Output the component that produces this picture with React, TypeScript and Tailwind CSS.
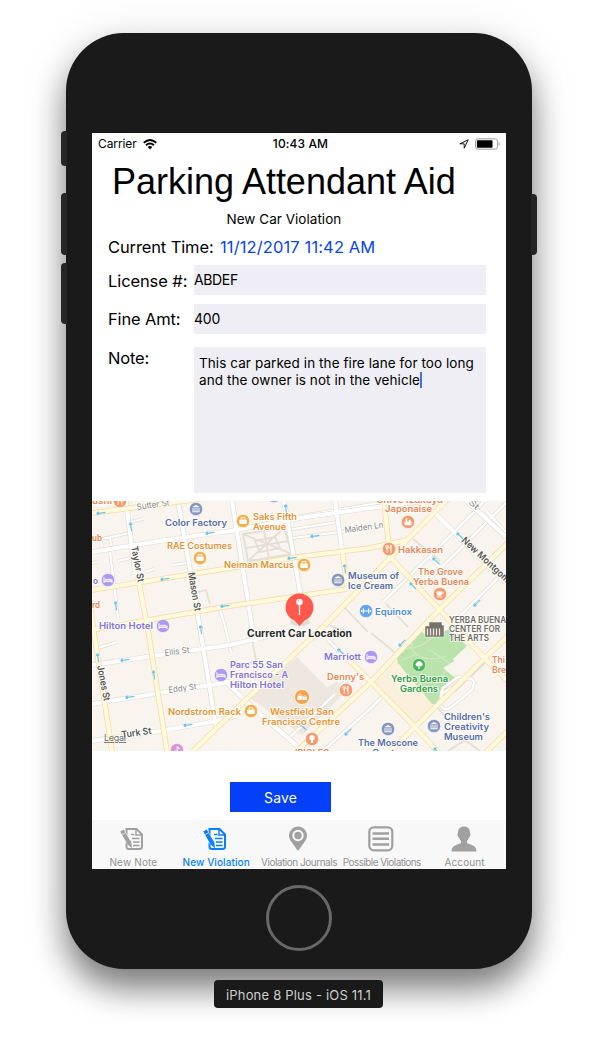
import React from "react";

const WHITE_ROADS: string[] = [
  "M92 552L160 541L230 531L300 518L370 508L440 499",
  "M126 501L135 573",
  "M178 501L190 570L200 628L216 727",
  "M232 501L252 626L256 642",
  "M284 501L301 597",
  "M335 501L342 550",
  "M92 665L160 655L230 645L290 631",
  "M92 704L160 693L230 682",
  "M92 741L160 731L216 721L236 716",
  "M222 678L252 707L297 746",
  "M435 513L470 548L506 583",
  "M467 501L506 537",
];

const THIN_ROADS: string[] = [
  "M293 538L340 532L385 526",
  "M97 540L130 533",
  "M100 540L103 550M110 538L112 549",
  "M110 552L118 618",
  "M130 522L143 519M118 561L135 557M145 572L154 569M173 565L188 563M98 648L117 642",
  "M92 563L97 562",
  "M290 518L384 502M287 530L338 522",
  "M220 610L225 626L231 652",
  "M330 572L332 580",
];

const DIAGONAL_ROADS: string[] = [
  "M383 602L431 555L478 508L484 501",
  "M418 590L452 557L506 503",
  "M450 626L506 570",
  "M323 751L370 709L382 697",
  "M328 640L350 662M340 687L352 675",
  "M290 737L335 694",
  "M450 527L470 549M487 512L506 532",
  "M430 557L446 574",
];

const YELLOW_ROADS: string[] = [
  "M92 513L200 499",
  "M92 590L230 568L297 557L370 548L407 540",
  "M92 630L160 618L230 606L347 589",
  "M138 578L148 630L167 751",
  "M90 601L93 626L112 751",
  "M342 550L348 590",
  "M193 751L250 696L323 627L388 560L407 540L448 499",
  "M384 501L389 548L390 557L438 608L485 659L508 681",
  "M297 751L370 683L438 611L508 543",
  "M385 757L415 727L485 658L508 636",
  "M350 661L371 682L415 727L439 753",
  "M485 753L508 731",
];

const ARROWS: [number, number, number][] = [
  [101, 513, -8], [131, 527, 82], [210, 533, -8], [165, 579, -8], [116, 606, 82],
  [225, 606, -8], [286, 509, 82], [315, 536, -8], [292, 558, -8], [345, 569, 82],
  [436, 561, 42], [413, 586, 45], [477, 603, -45], [201, 630, 82], [98, 658, 82],
  [125, 660, -8], [154, 675, 82], [130, 697, -8], [188, 725, -8], [341, 652, 42],
  [303, 727, 42], [348, 732, -45], [402, 643, -45], [460, 536, 42], [437, 751, 45],
];

type Kind = "bag" | "museum" | "food" | "bed" | "cup" | "gym" | "tree" | "bulb" | "music" | "shop";
const POIS: [number, number, string, Kind][] = [
  [120, 501, "#f49a6c", "food"], [196, 509, "#8495bd", "museum"], [243, 521, "#f2ae4c", "bag"],
  [200, 558, "#f2ae4c", "bag"], [108, 580, "#ad99ee", "bed"], [304, 565, "#f2ae4c", "bag"],
  [338, 580, "#8495bd", "museum"], [389, 549, "#f49a6c", "food"], [408, 522, "#f49a6c", "shop"],
  [440, 594, "#f49a6c", "cup"], [366, 611, "#66a5ea", "gym"], [163, 626, "#ad99ee", "bed"],
  [221, 675, "#ad99ee", "bed"], [371, 657, "#ad99ee", "bed"], [346, 690, "#f49a6c", "food"],
  [251, 711, "#f2ae4c", "bag"], [419, 665, "#4eb65a", "tree"], [388, 729, "#8495bd", "museum"],
  [434, 726, "#8495bd", "museum"], [312, 739, "#f49a6c", "bulb"], [177, 750, "#d59ad4", "music"],
  [274, 496, "#ad99ee", "bed"],
];

const GLYPHS: Record<Kind, React.ReactNode> = {
  bag: <g><rect x="-3.7" y="-1.5" width="7.4" height="4.5" rx=".7" fill="#fff" /><path d="M-1.8-1.7v-1.7h3.6v1.7" fill="none" stroke="#fff" strokeWidth=".9" /></g>,
  museum: <g fill="#fff"><path d="M-4-1.8L0-4l4 2.2zM-3.7 2.3h7.4v1h-7.4z" /><path d="M-3-1v3M-1-1v3M1-1v3M3-1v3" stroke="#fff" strokeWidth=".9" /></g>,
  food: <g fill="none" stroke="#fff" strokeWidth=".9"><path d="M-3-3.8v2.3q0 1 1.2 1T-.6-1.5v-2.3M-1.8-3.8V4M2 4v-8q-1.2 1.8-.9 4.5H2" /></g>,
  bed: <g stroke="#fff" fill="#fff"><path d="M-4-2.8V3M4-.2V3M-4 1.4h8" strokeWidth="1" fill="none" /><path d="M-2.8-.8h5.4q1 0 1 1.1h-6.4z" strokeWidth=".4" /></g>,
  cup: <g fill="none" stroke="#fff"><path d="M-3.2-2.6h5v2.3q0 2-2.5 2t-2.5-2z" fill="#fff" strokeWidth=".4" /><path d="M2-1.8h1.3q.8 1.6-1.3 1.6M-3.5 3h6" strokeWidth=".8" /></g>,
  gym: <path d="M-4.3-1v2M-2.6-2.5v5M2.6-2.5v5M4.3-1v2M-2.6 0h5.2" fill="none" stroke="#fff" strokeWidth="1.2" />,
  tree: <g fill="#fff"><circle cx="-1.3" cy="-.7" r="2.1" /><circle cx="1.5" cy="-.7" r="2.1" /><circle cx="0" cy="-2" r="2" /><path d="M-.6 0h1.2v4H-.6z" /></g>,
  bulb: <g fill="#fff"><circle cy="-1.3" r="2.6" /><path d="M-1 1h2v3h-2z" /></g>,
  music: <g fill="#fff"><circle cx="-1.2" cy="2" r="1.6" /><path d="M-.3 2v-5.8l2.8 1.6v1.4L.5-1.8V2z" /></g>,
  shop: <g fill="#fff"><path d="M-3.5 0h7v3.2h-7zM-2.5-3.8h1.8V0h-1.8z" /><circle cx="1.8" cy="-1" r="1.2" /></g>,
};

// x, baseline, width, colour, text, font size, rotation, weight
type Label = [number, number, number, string, string, number?, number?, number?];
const ORANGE = "#e68654";
const GOLD = "#df9433";
const VIOLET = "#8472d8";
const NAVY = "#566da5";
const LABELS: Label[] = [
  [92, 504, 20, ORANGE, "ushi"],
  [165, 526, 62, NAVY, "Color Factory"],
  [253, 520, 44, GOLD, "Saks Fifth"], [253, 530, 33, GOLD, "Avenue"],
  [167, 549, 65, GOLD, "RAE Costumes"],
  [224, 568, 70, GOLD, "Neiman Marcus"],
  [92, 541, 10, ORANGE, "ub"], [93, 584, 5, VIOLET, "o"], [92, 608, 8, ORANGE, "rd"],
  [99, 629, 54, VIOLET, "Hilton Hotel"],
  [376, 503, 67, ORANGE, "Chive Izakaya"], [385, 512, 47, ORANGE, "Japonaise"],
  [398, 553, 45, ORANGE, "Hakkasan"],
  [418, 575, 45, ORANGE, "The Grove"], [413, 585, 56, ORANGE, "Yerba Buena"],
  [348, 579, 51, NAVY, "Museum of"], [348, 589, 45, NAVY, "Ice Cream"],
  [375, 615, 37, "#4e8dd2", "Equinox"],
  [449, 623, 57, "#706c62", "YERBA BUENA"], [449, 632, 51, "#706c62", "CENTER FOR"], [449, 641, 40, "#706c62", "THE ARTS"],
  [324, 660, 37, VIOLET, "Marriott"], [327, 680, 37, ORANGE, "Denny's"],
  [230, 668, 53, VIOLET, "Parc 55 San"], [230, 678, 58, VIOLET, "Francisco - A"], [230, 688, 54, VIOLET, "Hilton Hotel"],
  [168, 715, 73, GOLD, "Nordstrom Rack"],
  [270, 715, 64, "#ef922f", "Westfield San"], [262, 725, 78, "#ef922f", "Francisco Centre"],
  [391, 682, 57, "#2c9b42", "Yerba Buena"], [400, 692, 38, "#2c9b42", "Gardens"],
  [492, 663, 13, ORANGE, "Thi"], [492, 673, 14, ORANGE, "Bre"],
  [444, 720, 46, NAVY, "Children's"], [444, 730, 45, NAVY, "Creativity"], [444, 740, 39, NAVY, "Museum"],
  [358, 746, 60, NAVY, "The Moscone"], [372, 756, 32, NAVY, "Center"],
  [295, 756, 34, ORANGE, "IPIGLES"],
];
const STREETS: Label[] = [
  [137, 510, 33, "#8a8a88", "Sutter St", 8.5, -8, 400],
  [345, 533, 39, "#8a8a88", "Maiden Ln", 8.5, -8, 400],
  [165, 656, 25, "#8a8a88", "Ellis St", 8.5, -8, 400],
  [169, 693, 28, "#8a8a88", "Eddy St", 8.5, -8, 400],
  [122, 738, 30, "#55554f", "Turk St", 9.5, -8, 600],
  [131, 547, 36, "#55554f", "Taylor St", 9.5, 79, 600],
  [188, 573, 39, "#55554f", "Mason St", 9.5, 80, 600],
  [97, 666, 36, "#55554f", "Jones St", 9.5, 79, 600],
  [461, 541, 76, "#55554f", "New Montgomery", 9.5, 43, 600],
  [468, 503, 11, "#8a8a88", "St", 8.5, 42, 400],
];

function MapText({ item }: { item: Label }) {
  const [x, y, w, fill, text, size = 9, angle = 0, weight = 600] = item;
  return (
    <text
      x={x} y={y} fill={fill} fontSize={size} fontWeight={weight} textLength={w}
      lengthAdjust="spacingAndGlyphs" transform={angle ? `rotate(${angle} ${x} ${y})` : undefined}
      stroke="#fff" strokeOpacity=".85" strokeWidth="1.8" strokeLinejoin="round" paintOrder="stroke"
    >
      {text}
    </text>
  );
}

function Roads({ list, casing, fill, width }: { list: string[]; casing: string; fill: string; width: number }) {
  return (
    <g fill="none" strokeLinejoin="round">
      {list.map((d, i) => <path key={"c" + i} d={d} stroke={casing} strokeWidth={width + 1.3} />)}
      {list.map((d, i) => <path key={"f" + i} d={d} stroke={fill} strokeWidth={width} />)}
    </g>
  );
}

function CityMap() {
  return (
    <svg viewBox="92 501 414 250" className="block h-[250px] w-[414px] shrink-0 overflow-hidden font-['Inter',sans-serif]">
      <rect x="92" y="501" width="414" height="250" fill="#f9f4ee" />
      <path d="M297 657L327 688L337 681L346 692L302 735L250 698Z" fill="#ede7e0" />
      <path d="M373 682L398 655L438 707L416 725Z" fill="#fbf0dc" />
      <path d="M396 651L418 630L433 638L449 629L467 646L453 659L460 670L435 704L432 704L398 663Z" fill="#b9e3ab" />
      <path d="M402 648Q420 650 431 638M411 640L412 650Q422 664 447 656M400 661L419 653M453 663L430 690M430 650L460 670" fill="none" stroke="#cfe9c2" strokeWidth="1.3" />
      <path d="M459 658L467 665L454 677L443 668Z" fill="#f9f4ee" />
      <g fill="none" stroke="#e3dfd4" strokeWidth="1.8">
        <path d="M243 534L284 528L292 554L248 561ZM243 534L292 554M284 528L248 561M264 531L269 558M246 548L289 541M255 541L275 537L280 548L260 552Z" />
        <path d="M198 592L206 590L210 604M344 607L368 632M386 604L408 627M413 539L440 561M252 640L256 660L240 668M486 662L454 692M436 706L450 722M448 751L465 740L480 751M371 633L398 655M330 626L350 632" />
      </g>
      <Roads list={THIN_ROADS} casing="#e2ddd5" fill="#ffffff" width={2.2} />
      <Roads list={DIAGONAL_ROADS} casing="#e0dbd4" fill="#ffffff" width={2.6} />
      <Roads list={WHITE_ROADS} casing="#e0dcd4" fill="#ffffff" width={4} />
      <path d="M441 700L441 694L467 679Q473 677 474 683L472 690L450 708Q444 711 441 706M441 694L443 688L458 677L465 678" fill="none" stroke="#dedbd3" strokeWidth="3.5" />
      <path d="M441 700L441 694L467 679Q473 677 474 683L472 690L450 708Q444 711 441 706M441 694L443 688L458 677L465 678" fill="none" stroke="#fff" strokeWidth="2.3" />
      <Roads list={YELLOW_ROADS} casing="#f8d5a8" fill="#fffadb" width={4.2} />
      <g fill="none" stroke="#6bc5ea" strokeWidth="1.2">
        {ARROWS.map(([x, y, a], i) => (
          <path key={i} transform={`translate(${x} ${y}) rotate(${a})`} d="M-4.500 0H4.500M-4.500 0l2.300-1.500M-4.500 0l2.300 1.500" />
        ))}
      </g>
      {STREETS.map((s) => <MapText key={s[4]} item={s} />)}
      <g transform="translate(425 622)" fill="#77736b" stroke="#fff" strokeWidth=".5">
        <path d="M4 0H17V3H19V15H0V4H4Z" />
        <path d="M2.500 6.500v7M5.500 6.500v7M8.500 6.500v7M11.500 6.500v7M14.500 6.500v7" stroke="#ece9e1" strokeWidth="1.300" />
      </g>
      {POIS.map(([x, y, color, kind], i) => (
        <g key={i} transform={`translate(${x} ${y})`}>
          <circle r="6.600" fill={color} stroke="#fff" strokeOpacity=".7" strokeWidth=".7" />
          {GLYPHS[kind]}
        </g>
      ))}
      <g transform="translate(302 697)">
        <circle r="7.500" fill="#f8a24a" stroke="#fff" strokeWidth=".7" />
        <path d="M-4.500-1.300h5v4.300h-5zM1-.2h3.700V3H1z" fill="#fff" /><path d="M-3.500-1.500q1.500-3.500 3 0M1.500-.5q1.300-2.500 2.500 0" fill="none" stroke="#fff" strokeWidth=".8" />
      </g>
      {LABELS.map((s, i) => <MapText key={i} item={s} />)}
      <text x="104" y="741" fontSize="9" fill="#73736f" textLength="22" textDecoration="underline">Legal</text>
      <ellipse cx="300" cy="622" rx="10" ry="4" fill="#000" opacity=".1" />
      <path d="M299.500 626L294.500 620.500A14 14 0 1 1 304.500 620.500Z" fill="#ff584d" />
      <circle cx="299.500" cy="602" r="3.200" fill="#fff" />
      <path d="M299.500 604v11" stroke="#fff" strokeWidth="1.300" />
      <circle cx="298.700" cy="601" r=".8" fill="#ff9a92" />
      <MapText item={[247, 637, 105, "#292929", "Current Car Location", 10, 0, 700]} />
    </svg>
  );
}

function NoteIcon() {
  return (
    <svg viewBox="0 0 24 24" className="h-6 w-6" fill="none" stroke="currentColor">
      <path d="M6.500 2H16.500L22 7.500V19.500Q22 22 19.500 22H9Q6.500 22 6.500 19.500Z" strokeWidth="2" />
      <path d="M16 2V8H22" strokeWidth="1.400" />
      <path d="M11 7.500H14.500M12 11.500H19.500M13 15H19.500M13 18.500H19.500" strokeWidth="1.600" />
      <path d="M1.800 4L8.500 15.500" stroke="#f8f8f8" strokeWidth="5.500" />
      <path d="M2 3.500L8.500 15" strokeWidth="4" />
      <path d="M6.500 16L11.500 20.500L10.700 14Z" fill="currentColor" strokeWidth=".8" />
      <path d="M2.300 7.500L5.800 5.500" stroke="#f8f8f8" strokeWidth=".8" />
    </svg>
  );
}

function PinIcon() {
  return (
    <svg viewBox="0 0 24 26" className="h-[26px] w-6" fill="currentColor">
      <path fillRule="evenodd" d="M12 25L4.500 14.500A9 9 0 1 1 19.500 14.500ZM12 3.800A5.700 5.700 0 1 0 12 15.200A5.700 5.700 0 0 0 12 3.800Z" />
      <circle cx="12" cy="9.500" r="3.700" />
    </svg>
  );
}

function ListIcon() {
  return (
    <svg viewBox="0 0 26 26" className="h-[26px] w-[26px]" fill="none" stroke="currentColor">
      <rect x="1.300" y="1.300" width="23" height="23" rx="4.500" strokeWidth="2.200" />
      <path d="M4.500 7.500H21M4.500 12.700H21M4.500 18.500H21" strokeWidth="2.600" />
    </svg>
  );
}

function PersonIcon() {
  return (
    <svg viewBox="0 0 26 26" className="h-[26px] w-[26px]" fill="currentColor">
      <path d="M13 .5C17 .5 19 3 18.900 6.500C20.200 7.500 19.500 10.500 18 11.500Q17.200 14 16 15V17.300C20 18.800 25.500 19.500 25.500 25.500H.5C.5 19.500 6 18.800 10 17.300V15Q8.800 14 8 11.500C6.500 10.500 5.800 7.500 7.100 6.500C7 3 9 .5 13 .5Z" />
    </svg>
  );
}

const TABS = [
  { label: "New Note", icon: <NoteIcon />, style: "text-[#929292] tracking-[0.15px]", active: false },
  { label: "New Violation", icon: <NoteIcon />, style: "text-[#087fff] tracking-[0.1px] font-medium", active: true },
  { label: "Violation Journals", icon: <PinIcon />, style: "text-[#929292] tracking-[-0.48px]", active: false },
  { label: "Possible Violations", icon: <ListIcon />, style: "text-[#929292] tracking-[-0.57px]", active: false },
  { label: "Account", icon: <PersonIcon />, style: "text-[#929292] tracking-[0.1px]", active: false },
];

function StatusBar() {
  return (
    <div className="grid h-5 grid-cols-[1fr_auto_1fr] items-center px-1.5 text-xs leading-[22px]">
      <div className="flex items-center gap-1.5">
        <span className="tracking-[-0.09px]">Carrier</span>
        <svg viewBox="0 0 14 11" className="h-[11px] w-3.5" fill="none" stroke="#000" strokeWidth="1.900">
          <path d="M.7 3.800Q7-1.800 13.300 3.800M3 6.300Q7 2.800 11 6.300" />
          <path d="M4.700 8Q7 6 9.300 8L7 10.500Z" fill="#000" stroke="none" />
        </svg>
      </div>
      <span className="pl-[3px] font-medium tracking-[0.12px]">10:43 AM</span>
      <div className="flex items-center justify-end gap-1.5">
        <svg viewBox="0 0 10 10" className="h-2.5 w-2.5" fill="none" stroke="#000" strokeWidth=".9">
          <path d="M.8 4.800L9.200.8L5.200 9.200V4.800Z" strokeLinejoin="round" />
        </svg>
        <svg viewBox="0 0 26 12" className="h-3 w-[25px]">
          <rect x=".6" y=".6" width="22.800" height="10.800" rx="2.500" fill="#fff" stroke="#999" strokeWidth="1" />
          <rect x="2" y="2" width="16.200" height="8" rx=".8" fill="#000" />
          <path d="M24.700 4v4q1-.5 1-2t-1-2" fill="#999" />
        </svg>
      </div>
    </div>
  );
}

function Screen() {
  return (
    <div className="flex h-[736px] w-[414px] flex-col overflow-hidden bg-white text-black">
      <StatusBar />
      <h1 className="mt-2 h-[42px] pl-5 font-['Liberation_Sans',sans-serif] text-[36px] leading-[42px] font-normal tracking-[-0.02px] whitespace-nowrap">
        Parking Attendant Aid
      </h1>
      <p className="mt-[7px] h-[18px] pl-[134.500px] text-[13.500px] leading-[18px] tracking-[0.03px]">New Car Violation</p>
      <div className="mt-[7px] flex h-6 items-center gap-[7px] pl-4 text-[16.500px] leading-6 whitespace-nowrap">
        <span className="w-[105px] tracking-[-0.12px]">Current Time:</span>
        <span className="tracking-[0.12px] text-[#0644f5]">11/12/2017 11:42 AM</span>
      </div>
      <div className="mt-1.5 grid grid-cols-[86px_292px] gap-y-[9px] pl-4">
        <label className="pt-1 text-[16.500px] leading-6 tracking-[-0.1px] whitespace-nowrap">License #:</label>
        <div className="h-[30px] bg-[#efeef4] text-[14px] leading-[30px] tracking-[-0.35px]">ABDEF</div>
        <label className="pt-[3px] text-[16.500px] leading-6 tracking-[-0.15px] whitespace-nowrap">Fine Amt:</label>
        <div className="h-[30px] bg-[#efeef4] text-[14px] leading-[30px] tracking-[-0.2px]">400</div>
        <label className="mt-[3px] text-[16.500px] leading-6 tracking-[-0.15px]">Note:</label>
        <div className="mt-1 h-[146px] bg-[#efeef4] pt-2 pl-[5px] text-[13.500px] leading-[17px] tracking-[0.08px] whitespace-nowrap">
          This car parked in the fire lane for too long
          <br />
          <span className="border-r-2 border-[#4b6fe8]">and the owner is not in the vehicle</span>
        </div>
      </div>
      <div className="mt-2 flex"><CityMap /></div>
      <button className="mt-[31px] ml-[138px] h-[30px] w-[101px] shrink-0 bg-[#0440f8] text-[14px] leading-[31px] tracking-[0.1px] text-white">Save</button>
      <nav className="mt-2 grid h-[49px] shrink-0 grid-cols-5 bg-[#f8f8f8]">
        {TABS.map((tab) => (
          <div key={tab.label} className={tab.active ? "text-[#087fff]" : "text-[#a0a0a0]"}>
            <div className="flex h-[34px] items-center justify-center pt-1 pr-0.5">{tab.icon}</div>
            <div className={`flex h-4 items-center justify-center text-[10px] leading-4 whitespace-nowrap ${tab.style}`}>{tab.label}</div>
          </div>
        ))}
      </nav>
    </div>
  );
}

export default function App() {
  return (
    <main className="flex h-[1050px] w-[598px] flex-col items-center overflow-hidden bg-white pt-[33px] font-['Inter',sans-serif]">
      <div className="relative flex h-[936px] w-[466px] shrink-0 flex-col items-center rounded-[58px] bg-[#1a1a1a] pt-[100px] shadow-[0_20px_32px_rgba(0,0,0,0.48),0_4px_50px_rgba(0,0,0,0.1)]">
        <i className="absolute top-[98px] -left-[5px] h-[35px] w-[6px] rounded-l-sm bg-[#262626]" />
        <i className="absolute top-[160px] -left-[5px] h-[62px] w-[6px] rounded-l-sm bg-[#262626]" />
        <i className="absolute top-[230px] -left-[5px] h-[61px] w-[6px] rounded-l-sm bg-[#262626]" />
        <i className="absolute top-[161px] -right-[5px] h-[61px] w-[6px] rounded-r-sm bg-[#262626]" />
        <Screen />
        <div className="mt-4 h-[66px] w-[66px] shrink-0 rounded-full border-[3px] border-[#686868]" />
      </div>
      <div className="relative mt-[11px] mr-px h-7 w-[169px] rounded-[4px] bg-[#1a1a1a] text-center text-[13px] leading-[31px] tracking-[0.2px] text-[#cfcfcf]">
        iPhone 8 Plus - iOS 11.1
      </div>
    </main>
  );
}
